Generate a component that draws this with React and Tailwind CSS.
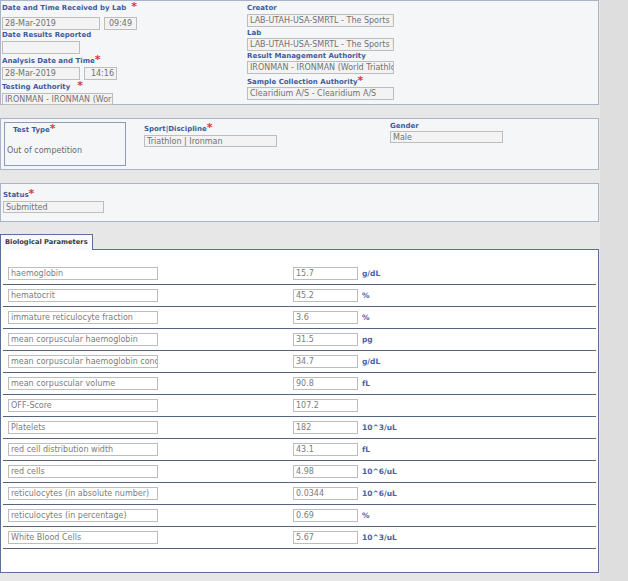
import React from 'react';

const font = { fontFamily: '"DejaVu Sans", Verdana, sans-serif' };

// red required-field marker, kept out of the line box so it never pushes rows down
const Star = ({ className = '' }) => (
  <span className={`inline-block h-0 align-top relative -top-[2px] text-[11px] leading-none text-[#d83a3a] ${className}`}>*</span>
);

const Label = ({ children, star, starGap = 'ml-0', className = '' }) => (
  <div className={`h-[11px] text-[7px] font-bold leading-[11px] text-[#3f5c9a] whitespace-nowrap ${className}`}>
    {children}
    {star && <Star className={starGap} />}
  </div>
);

const Box = ({ value = '', w, className = '', bg = 'bg-[#f3f3f3]' }) => (
  <div
    className={`h-[13px] border border-[#bdbdbd] ${bg} px-[2px] text-[8px] leading-[11px] text-[#727272] whitespace-nowrap overflow-hidden ${w} ${className}`}
  >
    {value}
  </div>
);

const params = [
  ['haemoglobin', '15.7', 'g/dL'],
  ['hematocrit', '45.2', '%'],
  ['immature reticulocyte fraction', '3.6', '%'],
  ['mean corpuscular haemoglobin', '31.5', 'pg'],
  ['mean corpuscular haemoglobin conc', '34.7', 'g/dL'],
  ['mean corpuscular volume', '90.8', 'fL'],
  ['OFF-Score', '107.2', ''],
  ['Platelets', '182', '10^3/uL'],
  ['red cell distribution width', '43.1', 'fL'],
  ['red cells', '4.98', '10^6/uL'],
  ['reticulocytes (in absolute number)', '0.0344', '10^6/uL'],
  ['reticulocytes (in percentage)', '0.69', '%'],
  ['White Blood Cells', '5.67', '10^3/uL'],
];

export default function App() {
  return (
    <div className="w-[628px] h-[581px] bg-[#dedede] overflow-hidden" style={font}>
      <div className="w-[600px] h-full bg-[#e7e7e7]">
        {/* sample details */}
        <div className="w-[599px] h-[105px] border border-[#a9b5c6] bg-[#f5f6f8] flex">
          <div className="w-[246px] pl-[1px] pt-[2px]">
            <Label star starGap="ml-[5px]">Date and Time Received by Lab</Label>
            <div className="flex gap-[4px] mt-[3px]">
              <Box value="28-Mar-2019" w="w-[98px]" />
              <Box value="09:49" w="w-[33px]" className="text-center" />
            </div>
            <Label>Date Results Reported</Label>
            <Box w="w-[78px]" />
            <Label star className="mt-[2px]">Analysis Date and Time</Label>
            <div className="flex gap-[4px]">
              <Box value="28-Mar-2019" w="w-[78px]" />
              <Box value="14:16" w="w-[33px]" className="text-right" />
            </div>
            <Label star starGap="ml-[7px]" className="mt-[2px]">Testing Authority</Label>
            <Box value="IRONMAN - IRONMAN (World Triathlon)" w="w-[111px]" className="!h-[12px]" />
          </div>
          <div className="pt-[2px]">
            <Label>Creator</Label>
            <Box value="LAB-UTAH-USA-SMRTL - The Sports Medicine" w="w-[147px]" />
            <Label className="mt-[1px] !h-[10px] !leading-[10px]">Lab</Label>
            <Box value="LAB-UTAH-USA-SMRTL - The Sports Medicine" w="w-[147px]" />
            <Label className="!h-[10px] !leading-[10px]">Result Management Authority</Label>
            <Box value="IRONMAN - IRONMAN (World Triathlon)" w="w-[147px]" />
            <Label star className="mt-[3px] !h-[10px] !leading-[10px]">Sample Collection Authority</Label>
            <Box value="Clearidium A/S - Clearidium A/S" w="w-[147px]" />
          </div>
        </div>

        {/* test type */}
        <div className="w-[599px] h-[52px] mt-[13px] border border-[#a9b5c6] bg-[#f5f6f8] flex">
          <div className="ml-[3px] mt-[3px] w-[122px] h-[44px] border border-[#8d9bb3] pl-[2px]">
            <Label star className="ml-[6px] mt-[2px]">Test Type</Label>
            <div className="mt-[10px] text-[8px] leading-[10px] text-[#6a6a6a]">Out of competition</div>
          </div>
          <div className="ml-[18px] mt-[5px]">
            <Label star>Sport|Discipline</Label>
            <Box value="Triathlon | Ironman" w="w-[133px]" className="!h-[12px]" />
          </div>
          <div className="ml-[113px] mt-[2px]">
            <Label className="!h-[10px] !leading-[10px]">Gender</Label>
            <Box value="Male" w="w-[113px]" className="!h-[12px]" />
          </div>
        </div>

        {/* status */}
        <div className="w-[599px] h-[39px] mt-[13px] border border-[#a9b5c6] bg-[#f5f6f8] pl-[2px] pt-[6px]">
          <Label star>Status</Label>
          <Box value="Submitted" w="w-[101px]" className="!h-[12px]" />
        </div>

        {/* biological parameters */}
        <div className="mt-[12px] flex">
          <div className="h-[16px] w-[93px] border border-b-0 border-[#5c6f98] bg-[#f8f9fb] pl-[4px] text-[6.7px] font-bold leading-[15px] text-[#3a3a3a] whitespace-nowrap relative z-10">
            Biological Parameters
          </div>
        </div>
        <div className="w-[599px] h-[324px] -mt-[1px] border border-[#5c6f98] bg-white pt-[13px] px-[2px]">
          {params.map(([name, value, unit]) => (
            <div key={name} className="h-[22px] border-b border-[#55657f] flex items-center">
              <Box value={name} w="w-[150px]" bg="bg-white" className="ml-[5px] !text-[#7c7c7c]" />
              <Box value={value} w="w-[65px]" bg="bg-white" className="ml-[135px] !text-[#7c7c7c]" />
              <span className="ml-[4px] text-[7.5px] font-bold text-[#4a63a0] whitespace-nowrap">{unit}</span>
            </div>
          ))}
        </div>
      </div>
    </div>
  );
}
